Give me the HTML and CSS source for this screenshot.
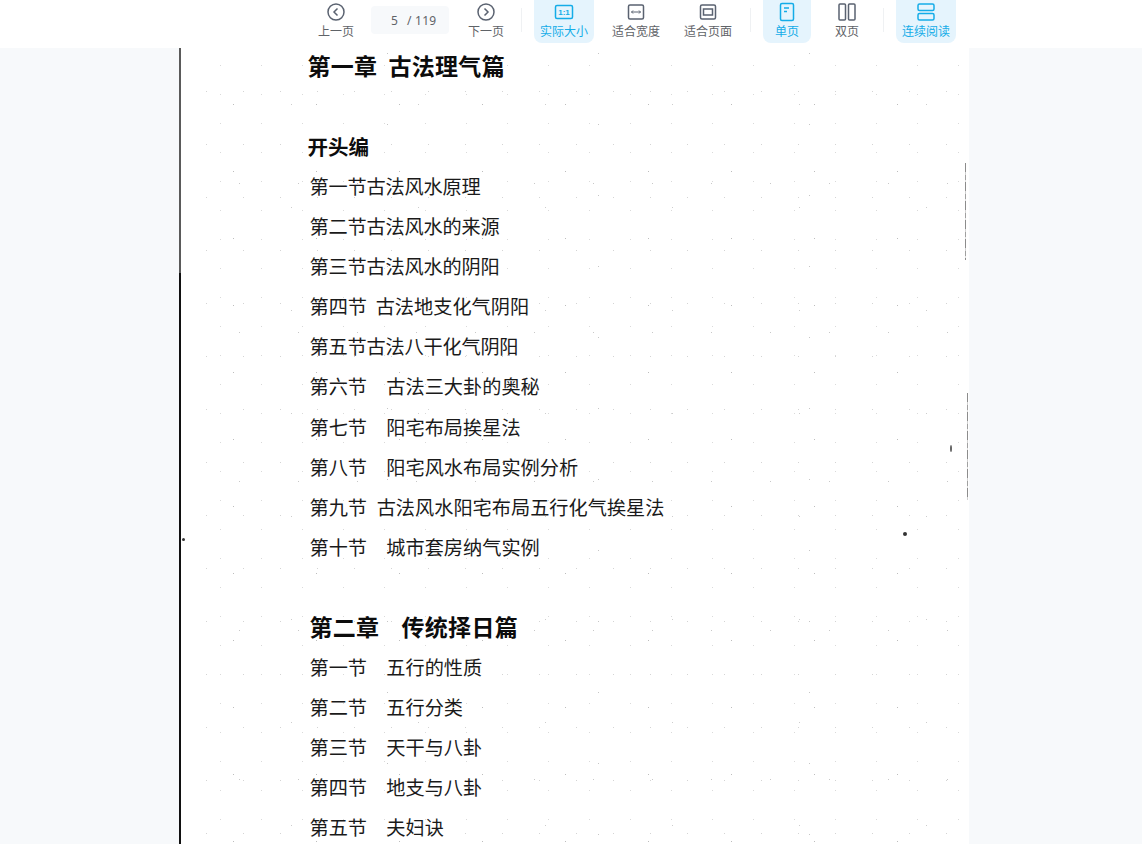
FILE: index.html
```html
<!DOCTYPE html>
<html lang="zh-CN">
<head>
<meta charset="utf-8">
<title>古法理气篇</title>
<link rel="stylesheet" href="styles.css">
</head>
<body>
<header class="toolbar">
  <div class="tool nav-tool">
    <svg class="icon" viewBox="0 0 20 20"><circle cx="10" cy="10" r="8" /><path d="M11.500 6.500 8 10l3.500 3.500"/></svg>
    <span>上一页</span>
  </div>
  <div class="pager"><span class="pager-cur">5</span><span>/ 119</span></div>
  <div class="tool nav-tool next">
    <svg class="icon" viewBox="0 0 20 20"><circle cx="10" cy="10" r="8" /><path d="M8.500 6.500 12 10l-3.500 3.500"/></svg>
    <span>下一页</span>
  </div>
  <i class="sep sep-a"></i>
  <div class="tool wide active">
    <svg class="icon" viewBox="0 0 20 20"><rect x="1.500" y="3.500" width="17" height="13" rx="1.500"/><text x="10" y="12.800" class="one">1:1</text></svg>
    <span>实际大小</span>
  </div>
  <div class="tool wide">
    <svg class="icon" viewBox="0 0 20 20"><rect x="2.500" y="3" width="15" height="14" rx="1.500"/><path class="thin" d="M5.500 10h9M7 8.500 5.500 10 7 11.500M13 8.500l1.500 1.500-1.500 1.500"/></svg>
    <span>适合宽度</span>
  </div>
  <div class="tool wide">
    <svg class="icon" viewBox="0 0 20 20"><rect x="2.500" y="3" width="15" height="14" rx="1.500"/><rect x="5.500" y="7" width="9" height="6"/></svg>
    <span>适合页面</span>
  </div>
  <i class="sep sep-b"></i>
  <div class="tool narrow active">
    <svg class="icon" viewBox="0 0 20 20"><rect x="3.500" y="1.500" width="13" height="17" rx="1.500"/><path d="M7 6h5M7 9.500h3"/></svg>
    <span>单页</span>
  </div>
  <div class="tool narrow second">
    <svg class="icon" viewBox="0 0 20 20"><rect x="2" y="2" width="6.500" height="16" rx="1"/><rect x="11.500" y="2" width="6.500" height="16" rx="1"/></svg>
    <span>双页</span>
  </div>
  <i class="sep sep-c"></i>
  <div class="tool wide active">
    <svg class="icon" viewBox="0 0 20 20"><rect x="2" y="2" width="16" height="6.500" rx="1.500"/><rect x="2" y="11.500" width="16" height="6.500" rx="1.500"/></svg>
    <span>连续阅读</span>
  </div>
</header>
<main class="viewer">
  <article class="page">
    <h1 class="chapter first">第一章&nbsp;&nbsp;古法理气篇</h1>
    <h2 class="part">开头编</h2>
    <ol class="toc">
      <li class="tight">第一节古法风水原理</li>
      <li class="tight">第二节古法风水的来源</li>
      <li class="tight">第三节古法风水的阴阳</li>
      <li>第四节&nbsp;&nbsp;古法地支化气阴阳</li>
      <li class="tight">第五节古法八干化气阴阳</li>
      <li class="spaced">第六节&nbsp;&nbsp;&nbsp;&nbsp;古法三大卦的奥秘</li>
      <li class="spaced">第七节&nbsp;&nbsp;&nbsp;&nbsp;阳宅布局挨星法</li>
      <li class="spaced">第八节&nbsp;&nbsp;&nbsp;&nbsp;阳宅风水布局实例分析</li>
      <li class="spaced">第九节&nbsp;&nbsp;古法风水阳宅布局五行化气挨星法</li>
      <li class="spaced">第十节&nbsp;&nbsp;&nbsp;&nbsp;城市套房纳气实例</li>
    </ol>
    <h1 class="chapter second-ch">第二章&nbsp;&nbsp;&nbsp;&nbsp;传统择日篇</h1>
    <ol class="toc toc-b">
      <li class="spaced">第一节&nbsp;&nbsp;&nbsp;&nbsp;五行的性质</li>
      <li class="spaced">第二节&nbsp;&nbsp;&nbsp;&nbsp;五行分类</li>
      <li class="spaced">第三节&nbsp;&nbsp;&nbsp;&nbsp;天干与八卦</li>
      <li class="spaced">第四节&nbsp;&nbsp;&nbsp;&nbsp;地支与八卦</li>
      <li class="spaced">第五节&nbsp;&nbsp;&nbsp;&nbsp;夫妇诀</li>
    </ol>
    <i class="speck s1"></i><i class="speck s2"></i><i class="speck s3"></i>
    <i class="edge e1"></i><i class="edge e2"></i>
  </article>
</main>
</body>
</html>
```
FILE: styles.css
```css
* { box-sizing: border-box; }
html, body { margin: 0; height: 100%; overflow: hidden; }
body { background: #f7f9fb; font-family: "Noto Sans CJK SC", "Liberation Sans", sans-serif; display: flex; flex-direction: column; height: 844px; }
.toolbar { height: 48px; background: #fff; display: flex; align-items: flex-start; padding-left: 312px; flex: none; position: relative; z-index: 2; }
.tool { height: 43px; border-radius: 0 0 8px 8px; display: flex; flex-direction: column; align-items: center; padding-top: 2px; font-size: 12px; line-height: 18px; color: #5f6368; flex: none; }
.tool span { white-space: nowrap; }
.icon { width: 20px; height: 20px; fill: none; stroke: #5a6270; stroke-width: 1.500; display: block; }
.icon .thin { stroke-width: 1; }
.one { font: 700 8px "Liberation Sans", sans-serif; text-anchor: middle; stroke: none; fill: #14ace8; }
.active { background: #e5f4fd; color: #14ace8; }
.active .icon { stroke: #14ace8; }
.nav-tool { width: 48px; }
.next { margin-left: 13px; }
.pager { width: 78px; height: 28px; margin: 6px 0 0 11px; background: #f7f9fb; border-radius: 4px; display: flex; align-items: center; font-size: 12px; color: #5f6368; font-family: "Noto Sans", sans-serif; gap: 9px; padding-left: 20px; letter-spacing: .2px; }
.sep { width: 1px; height: 24px; background: #eff1f3; margin-top: 8px; flex: none; }
.sep-a { margin-left: 11px; margin-right: 12px; }
.sep-b { margin-left: 12px; margin-right: 12px; }
.sep-c { margin-left: 12px; margin-right: 12px; }
.wide { width: 60px; }
.wide + .wide { margin-left: 12px; }
.narrow { width: 48px; }
.second { margin-left: 12px; }
.viewer { flex: 1; display: flex; justify-content: center; overflow: hidden; }
.page { position: relative; width: 790px; margin-left: 5px; height: 796px; flex: none; background-color: #fff; border-left: 2px solid #111; border-image: linear-gradient(#5a5a5a 0 225px, #111 225px) 1; padding: 0 0 0 127px; color: #1a1a1a; overflow: hidden;
  background-image:
    radial-gradient(circle, #bdbdbd .6px, transparent .9px),
    radial-gradient(circle, #cdcdcd .6px, transparent .9px),
    radial-gradient(circle, #c8c8c8 .5px, transparent .9px),
    radial-gradient(circle, #d4d4d4 .6px, transparent .9px),
    radial-gradient(circle, #dadada .6px, transparent .9px),
    radial-gradient(circle, #c6c6c6 .5px, transparent .9px);
  background-size: 83px 67px, 127px 103px, 59px 149px, 37px 53px, 41px 29px, 211px 71px;
  background-position: 11px 23px, 47px 5px, 29px 61px, 7px 17px, 19px 3px, 101px 41px;
}
.chapter { margin: 0; font-size: 23px; line-height: 36px; font-weight: 700; color: #0c0c0c; white-space: nowrap; letter-spacing: .3px; }
.first { margin-top: -1px; }
.second-ch { margin: 41px 0 0 2px; }
.part { margin: 48px 0 0; font-size: 20.500px; line-height: 31px; font-weight: 700; color: #0c0c0c; }
.toc { list-style: none; margin: 0 0 0 2px; padding: 0; }
.part + .toc { margin-top: 4px; }
.toc-b { margin-top: 3px; }
.toc li { height: 40.100px; line-height: 40px; font-size: 19.200px; white-space: nowrap; font-weight: 400; }
.toc .tight { letter-spacing: -.2px; }
.toc .spaced { word-spacing: .5px; }
.speck { position: absolute; background: #333; border-radius: 50%; }
.s1 { left: 1px; top: 490px; width: 3px; height: 3px; }
.s2 { left: 722px; top: 484px; width: 4px; height: 4px; }
.s3 { left: 769px; top: 397px; width: 2px; height: 7px; background: #666; }
.edge { position: absolute; width: 1px; background: repeating-linear-gradient(#8c8c8c 0 9px, #d0d0d0 9px 12px, #a0a0a0 12px 17px, #e0e0e0 17px 19px); }
.e1 { left: 784px; top: 115px; height: 97px; }
.e2 { left: 786px; top: 345px; height: 107px; }
```
